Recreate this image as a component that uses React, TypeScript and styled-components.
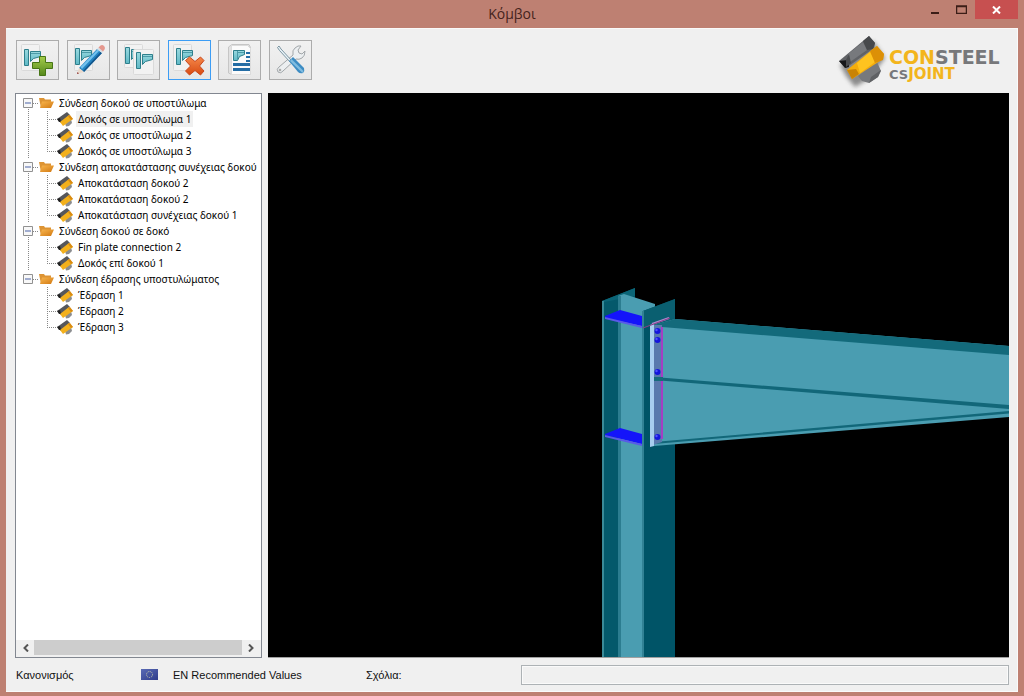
import React, { useState } from "react";
import styled, { createGlobalStyle } from "styled-components";

const GlobalStyle = createGlobalStyle`
  * { box-sizing: border-box; }
  html, body { margin: 0; padding: 0; }
  button, input { font: inherit; color: inherit; }
  ul { list-style: none; margin: 0; padding: 0; }
`;

const Frame = styled.div`
  display: flex;
  flex-direction: column;
  min-height: 100vh;
  padding: 0 6px 4px;
  background: #be8072;
  font-family: "Liberation Sans", Arial, sans-serif;
  font-size: 11px;
  color: #111;
`;

const TitleBar = styled.header`
  display: grid;
  grid-template-columns: 1fr auto 1fr;
  height: 28px;
`;

const Title = styled.h1`
  grid-column: 2;
  margin: 0;
  font: 400 14px/27px "Open Sans", "Noto Sans", sans-serif;
  color: #45231c;
`;

const WindowButtons = styled.div`
  display: flex;
  justify-content: flex-end;
  align-items: flex-start;
`;

const WindowButton = styled.button<{ $close?: boolean }>`
  display: flex;
  justify-content: center;
  align-items: center;
  width: ${(p) => (p.$close ? 43 : 27)}px;
  height: 19px;
  padding: 0;
  border: 0;
  background: ${(p) => (p.$close ? "#c75050" : "transparent")};
`;

const Client = styled.main`
  flex: 1;
  display: flex;
  flex-direction: column;
  padding: 0 8px 0 9px;
  background: #f0f0f0;
  border: solid #fafafa;
  border-width: 1px 1px 1px 0;
`;

const TopRow = styled.div`
  display: flex;
  justify-content: space-between;
  align-items: flex-start;
  height: 64px;
`;

const Toolbar = styled.div`
  display: flex;
  justify-content: space-between;
  width: 297px;
  padding: 11px 0 0 1px;
`;

const ToolButton = styled.button<{ $active?: boolean }>`
  display: flex;
  justify-content: center;
  align-items: center;
  width: 43px;
  height: 40px;
  padding: 0;
  border: 1px solid ${(p) => (p.$active ? "#3c9df5" : "#acacac")};
  background: linear-gradient(#f1f1f1, #e7e7e7);
`;

const Brand = styled.div`
  display: flex;
  align-items: flex-start;
  padding: 5px 4px 0 0;
`;

const BrandText = styled.div`
  display: flex;
  flex-direction: column;
  min-width: 116px;
  padding-top: 15px;
  font: 700 19px/17px "DejaVu Sans", sans-serif;
  color: #77787b;
`;

const BrandSub = styled.span`
  font-size: 15px;
`;

const Small = styled.span`
  font-size: 13px;
`;

const Gold = styled.span`
  color: #f3b51c;
`;

const Panels = styled.div`
  flex: 1;
  display: grid;
  grid-template-columns: 247px minmax(0, 1fr);
  gap: 6px;
`;

const TreePanel = styled.section`
  display: flex;
  flex-direction: column;
  border: 1px solid #828790;
  background: #fff;
  overflow: hidden;
`;

const Tree = styled.ul`
  flex: 1;
  padding: 1px 0 0 7px;
  font: 10px/16px "Noto Sans", "DejaVu Sans", sans-serif;
  white-space: nowrap;
  color: #000;
`;

const Group = styled.li`
  background: repeating-linear-gradient(#888 0 1px, transparent 1px 2px) 5px 8px / 1px 100% no-repeat;
  &:last-child { background: none; }
`;

const Row = styled.div`
  display: flex;
  align-items: center;
  height: 16px;
  svg { flex-shrink: 0; }
`;

const Expander = styled.button`
  width: 10px;
  height: 10px;
  padding: 0;
  border: 0;
  background: #fff;
  svg { display: block; }
`;

const Dots = styled.span<{ $w: number }>`
  flex-shrink: 0;
  width: ${(p) => p.$w}px;
  height: 1px;
  background: repeating-linear-gradient(90deg, #888 0 1px, transparent 1px 2px);
`;

const Label = styled.button<{ $selected?: boolean }>`
  height: 16px;
  margin-left: 3px;
  padding: 0 2px;
  border: 0;
  background: ${(p) => (p.$selected ? "#f0f0f0" : "transparent")};
`;

const Children = styled.ul`
  padding-left: 24px;
`;

const Leaf = styled.li`
  background: repeating-linear-gradient(#888 0 1px, transparent 1px 2px) 0 0 / 1px 16px no-repeat;
  &:last-child { background-size: 1px 8px; }
`;

const ScrollBar = styled.div`
  display: flex;
  height: 17px;
  padding: 0 2px 2px 1px;
  background: #f0f0f0;
`;

const ScrollArrow = styled.button`
  display: flex;
  align-items: center;
  justify-content: center;
  width: 17px;
  padding: 0;
  border: 0;
  background: transparent;
`;

const Thumb = styled.div`
  flex: 1;
  background: #cdcdcd;
`;

const Viewport = styled.section`
  min-height: 400px;
  background: #000;
  border-bottom: 1px solid #a0a0a0;
  svg { display: block; width: 100%; height: 100%; }
`;

const StatusBar = styled.footer`
  display: grid;
  grid-template-columns: 125px 32px 193px 155px minmax(0, 1fr);
  align-items: center;
  height: 33px;
  padding-left: 1px;
`;

const Comment = styled.input`
  width: 100%;
  height: 20px;
  padding: 0 4px;
  border: 1px solid #adb2b5;
  background: #f0f0f0;
  box-shadow: inset 0 0 0 1px #fafafa;
`;

const groups = [
  { name: "Σύνδεση δοκού σε υποστύλωμα", items: ["Δοκός σε υποστύλωμα 1", "Δοκός σε υποστύλωμα 2", "Δοκός σε υποστύλωμα 3"] },
  { name: "Σύνδεση αποκατάστασης συνέχειας δοκού", items: ["Αποκατάσταση δοκού 2", "Αποκατάσταση δοκού 2", "Αποκατάσταση συνέχειας δοκού 1"] },
  { name: "Σύνδεση δοκού σε δοκό", items: ["Fin plate connection 2", "Δοκός επί δοκού 1"] },
  { name: "Σύνδεση έδρασης υποστυλώματος", items: ["Έδραση 1", "Έδραση 2", "Έδραση 3"] },
];

const Profile = ({ x = 0, y = 0 }: { x?: number; y?: number }) => (
  <g transform={`translate(${x} ${y})`} stroke="#2e7f8c" fill="url(#steel)">
    <path d="M.5.5h4v16h-4z" />
    <path d="M6.500 2.500h10v5l-7 2-3 3z" />
    <path d="M7 4.500h9" stroke="#4d9ba8" />
  </g>
);

const Sheet = ({ x = 0, y = 0, w = 18, h = 26 }: { x?: number; y?: number; w?: number; h?: number }) => (
  <rect x={x + 0.5} y={y + 0.5} width={w} height={h} rx="1" fill="#f2f2f2" stroke="#dadada" />
);

const Icon = ({ children }: { children: React.ReactNode }) => (
  <svg width="33" height="32" viewBox="0 0 33 32" aria-hidden="true">{children}</svg>
);

const tools = [
  {
    label: "Νέος κόμβος",
    icon: (
      <Icon>
        <Sheet /><Profile x={3} y={5} />
        <path d="M18.500 12.500h6v6h7v6h-7v7h-6v-7h-7v-6h7z" fill="url(#green)" stroke="#477516" />
      </Icon>
    ),
  },
  {
    label: "Επεξεργασία",
    icon: (
      <Icon>
        <Sheet x={2} /><Profile x={3} y={4} />
        <path d="M7 24 25 5l5 4-18 19z" fill="#2384c2" />
        <path d="M8.500 23 26 5l1.500 1.500L10 25z" fill="#72c1ed" />
        <path d="m11 27 17.500-19 1.500 1-18 19z" fill="#14568c" />
        <path d="m25 5 1.500-1.500 5 4L30 9z" fill="#d9dee3" />
        <path d="m26.500 3.500 2-2q2-1 3.500.5t.5 3.500l-1.500 2z" fill="#e5988e" />
        <path d="m7 24-2 6 7-2z" fill="#ead9cb" /><path d="m5.500 28-.5 2 2-.5z" fill="#8a2e2e" />
      </Icon>
    ),
  },
  {
    label: "Αντιγραφή",
    icon: (
      <Icon>
        <Sheet x={2} y={0} w={18} h={23} /><Profile x={3} y={3} />
        <Sheet x={11} y={5} w={20} h={25} /><Profile x={14} y={8} />
      </Icon>
    ),
  },
  {
    label: "Διαγραφή",
    active: true,
    icon: (
      <Icon>
        <Sheet y={0} /><Profile x={3} y={4} />
        <path d="m12.500 16.500 4-3.500 5.500 4.500 5.500-4.500 3.500 3.500-4.500 5.500 4.500 5-3.500 4-5.500-4.500-5.500 4.500-4-4 5-5z" fill="url(#red)" stroke="#c9481c" />
      </Icon>
    ),
  },
  {
    label: "Έκθεση",
    icon: (
      <Icon>
        <path d="M5.500 3 9 .5h17l1.500 3v27h-19l-3-1.500z" fill="#e2e2e2" stroke="#c6c6c6" />
        <path d="M8.500 1.500h16l3 3v26h-19z" fill="#fbfbfb" stroke="#dcdcdc" />
        <path d="M10.500 6.500h11v4l-5 2-2 4h-4z" fill="url(#steel)" stroke="#2e7f8c" />
        <path d="M14.500 7v9M15 8.500h6" stroke="#4d9ba8" />
        <path d="M23 9h4M23 13h4M23 17h4" stroke="#246da5" strokeWidth="2" />
        <path d="M10 20.500h17M10 25.500h17" stroke="#246da5" strokeWidth="3" />
      </Icon>
    ),
  },
  {
    label: "Ρυθμίσεις",
    icon: (
      <Icon>
        <path d="M4 28q-2-3 1-5L19 11q-1-5 2-7 3-3 6-2l-3 4 1 3 3 1 3-3q0 5-3 7-3 2-6 1L9 27q-2 3-5 1z" fill="#eceff1" stroke="#a2a7aa" />
        <circle cx="6" cy="26" r="1.300" fill="#aaa" />
        <path d="m5 2-1.500 1.500 2 3 11 12 1.500-1.500L7 5z" fill="#e8f2f7" stroke="#607d8d" strokeWidth=".8" />
        <path d="m15 17 4-4 11 11q1 3-1 5-3 1-5-1z" fill="#3d8cc3" />
        <path d="m16 17 1.500-2 12 12-1 2z" fill="#80bce0" />
      </Icon>
    ),
  },
];

const SharedPaints = () => (
  <svg width="0" height="0" style={{ display: "block" }} aria-hidden="true">
    <defs>
      <linearGradient id="steel" x1="0" y1="0" x2="0" y2="1"><stop stopColor="#9ad9df" /><stop offset="1" stopColor="#5fb9c6" /></linearGradient>
      <linearGradient id="green" x1="0" y1="0" x2="0" y2="1"><stop stopColor="#a4cc4a" /><stop offset="1" stopColor="#55881b" /></linearGradient>
      <linearGradient id="red" x1="0" y1="0" x2="0" y2="1"><stop stopColor="#f5884a" /><stop offset="1" stopColor="#d84a12" /></linearGradient>
      <linearGradient id="folder" x1="0" y1="0" x2="1" y2="1"><stop stopColor="#f9b64e" /><stop offset="1" stopColor="#d07812" /></linearGradient>
      <linearGradient id="flag" x1="0" y1="0" x2="1" y2="1"><stop stopColor="#5a6bb5" /><stop offset="1" stopColor="#2f3c8a" /></linearGradient>
    </defs>
  </svg>
);

const BrandMark = () => (
  <svg width="54" height="56" viewBox="0 0 54 56" aria-hidden="true">
    <defs><filter id="shade" x="-30%" y="-30%" width="160%" height="160%"><feGaussianBlur stdDeviation="2.200" /></filter></defs>
    <path d="m5 31 33-24 12 17-15 20-15 9-9-11z" fill="#555" opacity=".65" filter="url(#shade)" />
    <path d="M23 42 42 28l4 9-3 6-9 6-7-2z" fill="#77797c" />
    <path d="m34 49 9-6 3-7-10 7z" fill="#5f6164" />
    <path d="M4 27 34 2l6 7-1 5-28 20z" fill="#606266" />
    <path d="m13 20 15-12 4 8-17 12z" fill="#77797d" />
    <path d="m28 7 6-5 6 7-2 6-6 1z" fill="#46484b" />
    <path d="m4 27 9-1 1 7-4 1z" fill="#17181a" />
    <path d="m11 26 3-6 2 9-5 4z" fill="#4b4d50" />
    <path d="m12 36 30-24 7 8-1 5-31 20z" fill="#f5ad0b" />
    <path d="m22 29 13-11 5 10-15 11z" fill="#ffc31f" />
    <path d="m35 17 7-5 7 8-1 6-8 3z" fill="#dc9007" />
    <path d="m12 36 9-1 3 5-7 5z" fill="#c98305" />
  </svg>
);

const JointIcon = () => (
  <svg width="16" height="16" viewBox="0 0 16 16" aria-hidden="true">
    <path d="m8 12 6-4 1 4-3 3-3 .5z" fill="#8b8d90" />
    <path d="m0 8 10-7 3 3-9 8z" fill="#55575b" /><path d="m0 8 3-1 1 4-2 0z" fill="#222" />
    <path d="m3 11 9-7 4 4-10 7z" fill="#f3b01b" /><path d="m11 5 2-1 3 4-2 1z" fill="#d98b12" />
  </svg>
);

const FolderIcon = () => (
  <svg width="15" height="14" viewBox="0 0 15 14" aria-hidden="true">
    <path d="M0 2h5l1 1.500h6V6L2 12z" fill="#dd9434" />
    <path d="M3 5.500h12L12 12H1z" fill="url(#folder)" />
  </svg>
);

const Flag = () => (
  <svg width="17" height="11" viewBox="0 0 17 11" aria-hidden="true">
    <path d="M0 0h17v11H0z" fill="url(#flag)" />
    <circle cx="8.500" cy="5.500" r="3" fill="none" stroke="#d8d8a8" strokeDasharray="1 1" strokeWidth=".9" />
  </svg>
);

const bolts = [331, 340, 372, 437];

const Model = () => (
  <svg viewBox="268 93 741 564" preserveAspectRatio="xMidYMid slice" role="img" aria-label="3D">
    <path d="M602 301 635 288v371h-33z" fill="#04596b" />
    <path d="M602 301 635 288v8l-15 3-16 3z" fill="#0c6577" />
    <path d="M618 296 624 294 655 304v355h-37z" fill="#4a9db1" />
    <path d="M618 296h3v363h-3z" fill="#2c7d90" />
    <path d="M602 301h2v358h-2z" fill="#3a8a98" />
    <path d="M605 316 620 310 642 316v10l-37-8z" fill="#1414fa" />
    <path d="m605 317 37 9v2l-37-9z" fill="#5959e8" />
    <path d="M605 434 620 428 642 434v10l-37-9z" fill="#1414fa" />
    <path d="m605 435 37 9v2l-37-9z" fill="#5959e8" />
    <path d="M643 311 675 299v360h-32z" fill="#005467" />
    <path d="M643 311 675 299v20l-32 9z" fill="#0a5f70" />
    <path d="M642 311h2v348h-2z" fill="#328295" />
    <path d="M654 325 675 319 1009 346v71L654 446z" fill="#4a9db1" />
    <path d="M654 325 675 319 1009 346v9L662 327z" fill="#136a7b" />
    <path d="M654 377 1009 405v4L654 380z" fill="#126779" />
    <path d="M654 442 1009 411v2.500L654 444z" fill="#126779" />
    <path d="M653 325h9v117l-9 3z" fill="#5979ad" />
    <path d="M662 327v112" stroke="#a43fc3" strokeWidth="2" />
    <path d="m653 377 10 0v4h-10z" fill="#176b7d" />
    <path d="M650 325 654 323v123l-4 1z" fill="#a7cdef" />
    <path d="m652 324 17-6" stroke="#aa8bd0" strokeWidth="2" />
    <path d="m643 328 27-10" stroke="#8b3c88" />
    {bolts.map((y) => (
      <g key={y}>
        <circle cx="657.500" cy={y} r="3" fill="#1515dc" />
        <circle cx="656.500" cy={y - 1} r="1.200" fill="#5151ff" />
      </g>
    ))}
  </svg>
);

export default function App() {
  const [closed, setClosed] = useState<number[]>([]);
  const [selected, setSelected] = useState("0-0");
  const toggle = (i: number) => setClosed((c) => (c.includes(i) ? c.filter((n) => n !== i) : [...c, i]));

  return (
    <Frame>
      <GlobalStyle />
      <SharedPaints />
      <TitleBar>
        <Title>Κόμβοι</Title>
        <WindowButtons>
          <WindowButton aria-label="Ελαχιστοποίηση">
            <svg width="8" height="10"><path d="M0 8h8" stroke="#3b1d17" strokeWidth="2" /></svg>
          </WindowButton>
          <WindowButton aria-label="Μεγιστοποίηση">
            <svg width="11" height="9"><path d="M.5 1.500h10v7H.5zM0 1h11" fill="none" stroke="#3b1d17" strokeWidth="1.500" /></svg>
          </WindowButton>
          <WindowButton $close aria-label="Κλείσιμο">
            <svg width="9" height="8"><path d="m1 .5 7 7m0-7-7 7" stroke="#fff" strokeWidth="2" /></svg>
          </WindowButton>
        </WindowButtons>
      </TitleBar>
      <Client>
        <TopRow>
          <Toolbar role="toolbar">
            {tools.map((t) => (
              <ToolButton key={t.label} aria-label={t.label} $active={t.active}>{t.icon}</ToolButton>
            ))}
          </Toolbar>
          <Brand>
            <BrandMark />
            <BrandText>
              <span><Gold>CON</Gold>STEEL</span>
              <BrandSub><Small>CS</Small><Gold>JOINT</Gold></BrandSub>
            </BrandText>
          </Brand>
        </TopRow>
        <Panels>
          <TreePanel>
            <Tree>
              {groups.map((g, i) => (
                <Group key={g.name}>
                  <Row>
                    <Expander aria-label={g.name} aria-expanded={!closed.includes(i)} onClick={() => toggle(i)}>
                      <svg width="10" height="10">
                        <path d="M.5.5h9v9h-9z" fill="#f8f8f8" stroke="#919191" />
                        <path d={closed.includes(i) ? "M2 5h6M5 2v6" : "M2 5h6"} stroke="#4b63a7" />
                      </svg>
                    </Expander>
                    <Dots $w={6} />
                    <FolderIcon />
                    <Label>{g.name}</Label>
                  </Row>
                  {!closed.includes(i) && (
                    <Children>
                      {g.items.map((item, j) => (
                        <Leaf key={j}>
                          <Row>
                            <Dots $w={10} />
                            <JointIcon />
                            <Label $selected={selected === `${i}-${j}`} onClick={() => setSelected(`${i}-${j}`)}>{item}</Label>
                          </Row>
                        </Leaf>
                      ))}
                    </Children>
                  )}
                </Group>
              ))}
            </Tree>
            <ScrollBar>
              <ScrollArrow aria-label="Αριστερά">
                <svg width="6" height="8"><path d="M5 .5 1.500 4 5 7.500" fill="none" stroke="#555" strokeWidth="2" /></svg>
              </ScrollArrow>
              <Thumb />
              <ScrollArrow aria-label="Δεξιά">
                <svg width="6" height="8"><path d="M1 .5 4.500 4 1 7.500" fill="none" stroke="#555" strokeWidth="2" /></svg>
              </ScrollArrow>
            </ScrollBar>
          </TreePanel>
          <Viewport><Model /></Viewport>
        </Panels>
        <StatusBar>
          <span>Κανονισμός</span>
          <Flag />
          <span>EN Recommended Values</span>
          <label htmlFor="comment">Σχόλια:</label>
          <Comment id="comment" readOnly />
        </StatusBar>
      </Client>
    </Frame>
  );
}
